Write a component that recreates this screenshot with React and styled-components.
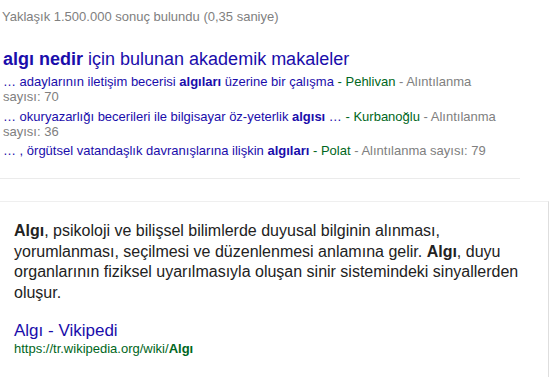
import React from "react";
import styled, { createGlobalStyle } from "styled-components";

const Global = createGlobalStyle`
  html, body { margin: 0; padding: 0; background: #fff; }
  body { font-family: "Liberation Sans", Arial, sans-serif; overflow: hidden; }
`;

const Page = styled.div`
  width: 549px;
  height: 377px;
  overflow: hidden;
  display: flex;
  flex-direction: column;
`;

const Stats = styled.div`
  margin: 9px 0 0 2px;
  font-size: 13px;
  line-height: 16px;
  color: #808080;
`;

const Scholar = styled.section`
  margin: 23px 0 0 3px;
  width: 500px;
`;

const Heading = styled.a`
  display: block;
  font-size: 18px;
  line-height: 22px;
  color: #1a0dab;
  text-decoration: none;
`;

const Entry = styled.div`
  font-size: 13px;
  line-height: 15px;
  color: #1a0dab;
  margin-top: ${(p) => p.$gap}px;
`;

const Author = styled.span`
  color: #006621;
`;

const Meta = styled.span`
  color: #808080;
`;

const Rule = styled.hr`
  width: 520px;
  margin: 20px 0 0 0;
  border: none;
  border-top: 1px solid #ebebeb;
`;

const Card = styled.article`
  margin-top: 22px;
  flex: 1;
  border-top: 1px solid #efefef;
  border-right: 1px solid #dedede;
  padding: 19px 20px 0 14px;
`;

const Desc = styled.p`
  margin: 0;
  font-size: 16px;
  line-height: 20.7px;
  color: #222;
`;

const WikiLink = styled.a`
  display: block;
  margin-top: 16px;
  font-size: 17px;
  line-height: 21px;
  color: #1a0dab;
  text-decoration: none;
`;

const Url = styled.div`
  font-size: 13px;
  line-height: 16px;
  color: #006621;
`;

export default function App() {
  return (
    <Page>
      <Global />
      <Stats>Yaklaşık 1.500.000 sonuç bulundu (0,35 saniye)</Stats>
      <Scholar>
        <Heading href="#">
          <b>algı nedir</b> için bulunan akademik makaleler
        </Heading>
        <Entry $gap={4}>
          … adaylarının iletişim becerisi <b>algıları</b> üzerine bir çalışma
          <Author> - Pehlivan</Author>
          <Meta> - Alıntılanma sayısı: 70</Meta>
        </Entry>
        <Entry $gap={5}>
          … okuryazarlığı becerileri ile bilgisayar öz-yeterlik <b>algısı</b> …
          <Author> - Kurbanoğlu</Author>
          <Meta> - Alıntılanma sayısı: 36</Meta>
        </Entry>
        <Entry $gap={4}>
          … , örgütsel vatandaşlık davranışlarına ilişkin <b>algıları</b>
          <Author> - Polat</Author>
          <Meta> - Alıntılanma sayısı: 79</Meta>
        </Entry>
      </Scholar>
      <Rule />
      <Card>
        <Desc>
          <b>Algı</b>, psikoloji ve bilişsel bilimlerde duyusal bilginin alınması,
          yorumlanması, seçilmesi ve düzenlenmesi anlamına gelir. <b>Algı</b>, duyu
          organlarının fiziksel uyarılmasıyla oluşan sinir sistemindeki sinyallerden
          oluşur.
        </Desc>
        <WikiLink href="#">Algı - Vikipedi</WikiLink>
        <Url>
          https://tr.wikipedia.org/wiki/<b>Algı</b>
        </Url>
      </Card>
    </Page>
  );
}
